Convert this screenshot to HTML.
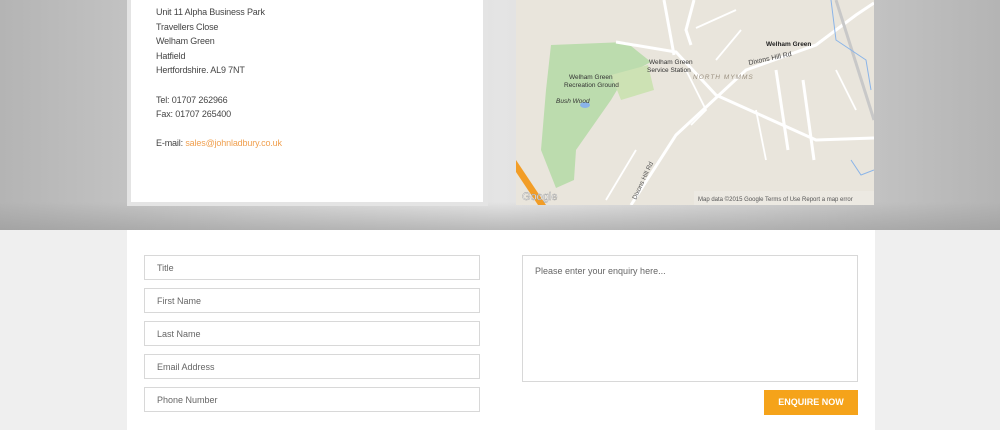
<!DOCTYPE html>
<html><head><meta charset="utf-8"><style>
*{margin:0;padding:0;box-sizing:border-box}
body{width:1000px;height:430px;overflow:hidden;font-family:"Liberation Sans",sans-serif;background:#efefef;position:relative}
.top{position:absolute;left:0;top:0;width:1000px;height:230px;background:linear-gradient(90deg,#b4b4b4 0%,#d0d0d0 25%,#e4e4e4 50%,#d0d0d0 75%,#b4b4b4 100%)}
.top:after{content:"";position:absolute;left:0;right:0;bottom:0;height:28px;background:linear-gradient(180deg,rgba(160,160,160,0),rgba(150,150,150,.55))}
.cardo{position:absolute;left:127px;top:0;width:361px;height:206px;background:#e4e4e4}
.card{position:absolute;left:131px;top:0;width:352px;height:202px;background:#fff;padding:5px 0 0 25px;font-size:9px;letter-spacing:-0.15px;color:#444;line-height:14.6px}
.card a{color:#f0a050;text-decoration:none}
.map{position:absolute;left:516px;top:0;width:358px;height:205px;background:#e9e5dc;overflow:hidden}
.bot{position:absolute;left:127px;top:230px;width:748px;height:200px;background:#fff}
.in{position:absolute;left:144px;width:336px;height:25px;border:1px solid #d8d8d8;font-size:9px;color:#666;padding:7px 12px}
.ta{position:absolute;left:522px;top:255px;width:336px;height:127px;border:1px solid #d8d8d8;font-size:9px;color:#666;padding:10px 12px}
.btn{position:absolute;left:764px;top:390px;width:94px;height:25px;background:#f5a31a;color:#fff;font-weight:bold;font-size:9px;text-align:center;line-height:25px}
</style></head><body>
<div class="top"></div>
<div class="cardo"></div>
<div class="card">Unit 11 Alpha Business Park<br>Travellers Close<br>Welham Green<br>Hatfield<br>Hertfordshire. AL9 7NT<br><br>Tel: 01707 262966<br>Fax: 01707 265400<br><br>E-mail: <a>sales@johnladbury.co.uk</a></div>
<div class="map"><svg width="358" height="205" font-family="Liberation Sans" font-size="6.5">
<path d="M35 45 L110 42 L135 62 L110 75 L95 100 L60 150 L58 180 L40 188 L25 150 L30 90Z" fill="#bcdcae"/>
<path d="M95 75 L132 65 L138 90 L105 100Z" fill="#cde2b4"/>
<ellipse cx="69" cy="105" rx="5" ry="3" fill="#8ab4e8"/>
<g stroke="#fff" stroke-width="3" fill="none">
<path d="M115 205 L160 135 L230 70 L300 45 L340 15 L358 3"/>
<path d="M100 42 L160 52 L200 95 L300 140 L358 138"/>
<path d="M148 0 L158 55"/><path d="M178 0 L170 30 L175 45"/>
<path d="M260 70 L272 150"/><path d="M287 80 L298 160"/>
</g>
<g stroke="#fff" stroke-width="1.8" fill="none"><path d="M180 28 L220 10"/><path d="M200 60 L225 30"/><path d="M240 110 L250 160"/><path d="M170 70 L190 110 L175 125"/><path d="M320 70 L340 110"/><path d="M90 200 L120 150"/></g>
<path d="M0 160 L30 205 L22 205 L0 172Z" fill="#f29d26"/>
<path d="M320 0 L358 120" stroke="#c8c8c8" stroke-width="3"/>
<path d="M315 0 L320 40 L350 60 L355 90 M335 160 L345 175 L358 170" stroke="#8ab4e8" fill="none"/>
<text x="250" y="46" font-weight="bold" fill="#222">Welham Green</text>
<text x="233" y="65" fill="#444" transform="rotate(-12 233 65)" font-size="7">Dixons Hill Rd</text>
<text x="133" y="64" fill="#333">Welham Green</text><text x="131" y="72" fill="#333">Service Station</text>
<text x="53" y="79" fill="#333">Welham Green</text><text x="48" y="87" fill="#333">Recreation Ground</text>
<text x="40" y="103" fill="#333" font-style="italic">Bush Wood</text>
<text x="177" y="79" fill="#9a9080" letter-spacing="1" font-style="italic">NORTH MYMMS</text>
<text x="120" y="200" fill="#555" transform="rotate(-65 120 200)">Dixons Hill Rd</text>
<rect x="178" y="191" width="180" height="14" fill="#ece9e2"/>
<text x="182" y="201" font-size="6" fill="#555">Map data ©2015 Google    Terms of Use    Report a map error</text>
<text x="6" y="200" font-size="11" fill="#fff" stroke="#999" stroke-width=".4">Google</text>
</svg></div>
<div class="bot"></div>
<div class="in" style="top:255px">Title</div>
<div class="in" style="top:288px">First Name</div>
<div class="in" style="top:321px">Last Name</div>
<div class="in" style="top:354px">Email Address</div>
<div class="in" style="top:387px">Phone Number</div>
<div class="ta">Please enter your enquiry here...</div>
<div class="btn">ENQUIRE NOW</div>
</body></html>
